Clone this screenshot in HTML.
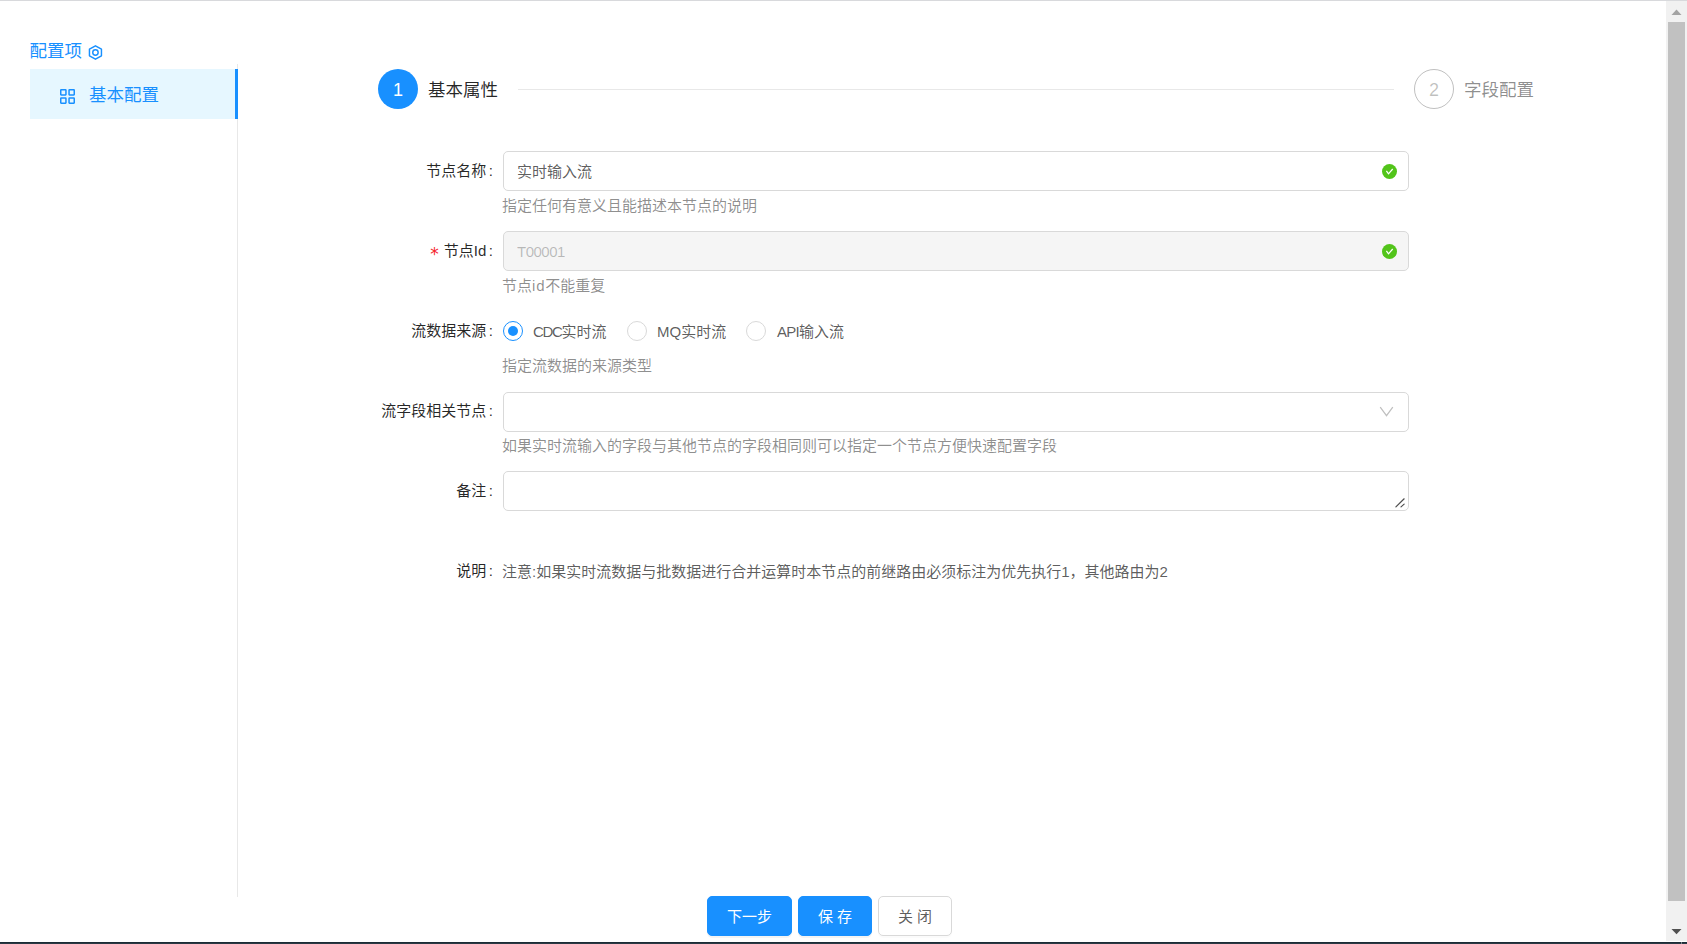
<!DOCTYPE html>
<html lang="zh-CN">
<head>
<meta charset="utf-8">
<title>配置项</title>
<style>
*{box-sizing:border-box;margin:0;padding:0}
html,body{width:1687px;height:944px;overflow:hidden;background:#fff}
body{position:relative;font-family:"Liberation Sans","Noto Sans CJK SC",sans-serif;font-size:15px;color:rgba(0,0,0,.65);font-weight:400}
.abs{position:absolute;white-space:nowrap}
.topline{left:0;top:0;width:1687px;height:1px;background:#d8d9dc}
.botbar{left:0;top:942px;width:1687px;height:2px;background:linear-gradient(#1c2b36 0,#1c2b36 50%,#2b3a44 50%,#2b3a44 100%)}
.bottick{left:1681px;top:942px;width:1px;height:2px;background:#7d8890}
/* scrollbar */
.sb-track{left:1666px;top:1px;width:21px;height:940px;background:#f1f1f1}
.sb-thumb{left:1668px;top:22px;width:17px;height:879px;background:#c1c1c1}
/* sidebar */
.side-title{left:29.5px;top:38px;height:26px;line-height:26px;font-size:17.5px;color:#1890ff}
.menu-item{left:30px;top:69px;width:208px;height:50px;background:#e6f7ff;border-right:3px solid #1890ff}
.menu-text{left:89px;top:82px;height:26px;line-height:26px;font-size:17.5px;color:#1890ff}
.vline{left:237px;top:64px;width:1px;height:833px;background:#e8e8e8}
/* steps */
.step-ico{width:40px;height:40px;border-radius:50%;top:69px;text-align:center;line-height:40px;font-size:18px;font-weight:400}
.step1{left:378px;background:#1890ff;color:#fff;line-height:42px}
.step2{left:1414px;border:1px solid rgba(0,0,0,.25);color:rgba(0,0,0,.25);line-height:40px}
.step-title{top:77px;height:26px;line-height:26px;font-size:17.5px}
.step-line{left:518px;top:89px;width:876px;height:1px;background:#e8e8e8}
/* form */
.label{right:1194px;height:40px;line-height:40px;font-size:15px;color:rgba(0,0,0,.85);text-align:right}
.ctl{left:503px;width:906px;height:40px;border:1px solid #d9d9d9;border-radius:5px;background:#fff}
.ctl-text{left:517px;height:40px;line-height:40px;font-size:15px}
.help{left:502px;height:24px;line-height:24px;font-size:15px;color:rgba(0,0,0,.45)}
.radio{width:20px;height:20px;border-radius:50%;border:1px solid #d9d9d9;background:#fff;top:321px}
.radio.on{border-color:#1890ff}
.radio.on::after{content:"";position:absolute;left:4px;top:4px;width:10px;height:10px;border-radius:50%;background:#1890ff}
.rlabel{top:312px;height:40px;line-height:40px;font-size:15px}
.label i{font-style:normal;margin-left:2.5px}
.star{color:#f5222d;font-family:"DejaVu Sans",sans-serif;font-size:17px;line-height:1;position:relative;top:4px;margin-right:5px}
.ls{letter-spacing:-1.3px}
/* buttons */
.btn{top:896px;height:40px;line-height:40px;border-radius:5px;font-size:15px;text-align:center;font-weight:400}
.btn.pri{background:#1890ff;color:#fff;border:1px solid #1890ff;box-shadow:0 2px 0 rgba(0,0,0,.045)}
.btn.def{background:#fff;color:rgba(0,0,0,.65);border:1px solid #d9d9d9;box-shadow:0 2px 0 rgba(0,0,0,.015)}
</style>
</head>
<body>
<div class="abs topline"></div>

<!-- sidebar -->
<div class="abs side-title">配置项</div>
<svg class="abs" style="left:88px;top:44px" width="15" height="17" viewBox="0 0 15 17" fill="none" stroke="#1890ff" stroke-width="1.45"><path d="M7.45 1.85 L13.45 5.2 L13.45 11.8 L7.45 15.15 L1.45 11.8 L1.45 5.2 Z" stroke-linejoin="round"/><circle cx="7.45" cy="8.5" r="2.7"/></svg>
<div class="abs vline"></div>
<div class="abs menu-item"></div>
<svg class="abs" style="left:60px;top:89px" width="15" height="15" viewBox="0 0 15 15" fill="none" stroke="#1890ff" stroke-width="1.5"><rect x="0.75" y="0.75" width="5.2" height="5.2" rx="0.4"/><rect x="9.05" y="0.75" width="5.2" height="5.2" rx="0.4"/><rect x="0.75" y="9.05" width="5.2" height="5.2" rx="0.4"/><rect x="9.05" y="9.05" width="5.2" height="5.2" rx="0.4"/></svg>
<div class="abs menu-text">基本配置</div>

<!-- steps -->
<div class="abs step-ico step1">1</div>
<div class="abs step-title" style="left:428px;color:rgba(0,0,0,.85)">基本属性</div>
<div class="abs step-line"></div>
<div class="abs step-ico step2">2</div>
<div class="abs step-title" style="left:1464px;color:rgba(0,0,0,.45)">字段配置</div>

<!-- row 1 -->
<div class="abs label" style="top:151px">节点名称<i>:</i></div>
<div class="abs ctl" style="top:151px"></div>
<svg class="abs" style="left:1382px;top:164px" width="15" height="15" viewBox="0 0 15 15"><circle cx="7.5" cy="7.5" r="7.5" fill="#52c41a"/><path d="M4.4 6.8 L6.5 9.8 L10.7 5" fill="none" stroke="#fff" stroke-width="1.25"/></svg>
<div class="abs ctl-text" style="top:152px">实时输入流</div>
<div class="abs help" style="top:194px">指定任何有意义且能描述本节点的说明</div>

<!-- row 2 -->
<div class="abs label" style="top:231px"><span class="star">*</span>节点Id<i>:</i></div>
<div class="abs ctl" style="top:231px;background:#f5f5f5"></div>
<svg class="abs" style="left:1382px;top:244px" width="15" height="15" viewBox="0 0 15 15"><circle cx="7.5" cy="7.5" r="7.5" fill="#52c41a"/><path d="M4.4 6.8 L6.5 9.8 L10.7 5" fill="none" stroke="#fff" stroke-width="1.25"/></svg>
<div class="abs ctl-text" style="top:232px;color:rgba(0,0,0,.25);letter-spacing:-.5px">T00001</div>
<div class="abs help" style="top:274px">节点<span style="letter-spacing:.8px">id</span>不能重复</div>

<!-- row 3 -->
<div class="abs label" style="top:311px">流数据来源<i>:</i></div>
<div class="abs radio on" style="left:503px"></div>
<div class="abs rlabel" style="left:533px"><span class="ls">CDC</span>实时流</div>
<div class="abs radio" style="left:627px"></div>
<div class="abs rlabel" style="left:657px">MQ实时流</div>
<div class="abs radio" style="left:746px"></div>
<div class="abs rlabel" style="left:777px"><span style="letter-spacing:-.7px">API</span>输入流</div>
<div class="abs help" style="top:354px">指定流数据的来源类型</div>

<!-- row 4 -->
<div class="abs label" style="top:391px">流字段相关节点<i>:</i></div>
<div class="abs ctl" style="top:392px"></div>
<svg class="abs" style="left:1378px;top:404px" width="18" height="16" viewBox="0 0 18 16"><path d="M2.2 3.2 L8.5 11.6 L14.8 3.2" fill="none" stroke="#bfbfbf" stroke-width="1.25"/></svg>
<div class="abs help" style="top:434px">如果实时流输入的字段与其他节点的字段相同则可以指定一个节点方便快速配置字段</div>

<!-- row 5 -->
<div class="abs label" style="top:471px">备注<i>:</i></div>
<div class="abs ctl" style="top:471px"></div>

<svg class="abs" style="left:1392px;top:495px" width="16" height="15" viewBox="0 0 16 15"><path d="M3.9 11.9 L12.15 3.8 M9 11.9 L12.15 9.1" fill="none" stroke="#4d4d4d" stroke-width="1.2" stroke-linecap="round"/></svg>

<!-- row 6 -->
<div class="abs label" style="top:551px">说明<i>:</i></div>
<div class="abs ctl-text" style="left:502px;top:552px">注意:如果实时流数据与批数据进行合并运算时本节点的前继路由必须标注为优先执行1，其他路由为2</div>

<!-- buttons -->
<div class="abs btn pri" style="left:707px;width:85px">下一步</div>
<div class="abs btn pri" style="left:798px;width:74px">保 存</div>
<div class="abs btn def" style="left:878px;width:74px">关 闭</div>

<!-- scrollbar -->
<div class="abs sb-track"></div>
<div class="abs sb-thumb"></div>
<svg class="abs" style="left:1666px;top:1px" width="21" height="21" viewBox="0 0 21 21"><path d="M10.5 8.5 L15.5 14 L5.5 14 Z" fill="#a3a3a3"/></svg>
<svg class="abs" style="left:1666px;top:921px" width="21" height="21" viewBox="0 0 21 21"><path d="M5.5 8 L15.5 8 L10.5 13.2 Z" fill="#505050"/></svg>
<div class="abs botbar"></div>
<div class="abs bottick"></div>
</body>
</html>
